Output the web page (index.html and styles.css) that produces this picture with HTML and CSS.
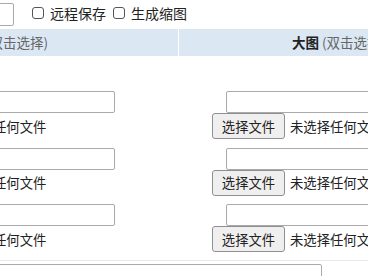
FILE: index.html
```html
<!DOCTYPE html>
<html lang="zh-CN">
<head>
<meta charset="utf-8">
<link rel="stylesheet" href="styles.css">
</head>
<body>
<div class="canvas">
  <div class="topbar">
    <input class="top-input" type="text">
    <label class="check"><input type="checkbox"><span>远程保存</span></label>
    <label class="check"><input type="checkbox"><span>生成缩图</span></label>
  </div>
  <div class="grid">
    <div class="head head-left"><b>小图</b>&nbsp;<span class="hint">(双击选择)</span></div>
    <div class="head head-right"><b>大图</b>&nbsp;<span class="hint">(双击选择)</span></div>
    <div class="cell cell-left">
      <div class="item"><input class="path" type="text"><div class="file"><button>选择文件</button><span>未选择任何文件</span></div></div>
      <div class="item"><input class="path" type="text"><div class="file"><button>选择文件</button><span>未选择任何文件</span></div></div>
      <div class="item"><input class="path" type="text"><div class="file"><button>选择文件</button><span>未选择任何文件</span></div></div>
    </div>
    <div class="cell cell-right">
      <div class="item"><input class="path" type="text"><div class="file"><button>选择文件</button><span>未选择任何文件</span></div></div>
      <div class="item"><input class="path" type="text"><div class="file"><button>选择文件</button><span>未选择任何文件</span></div></div>
      <div class="item"><input class="path" type="text"><div class="file"><button>选择文件</button><span>未选择任何文件</span></div></div>
    </div>
  </div>
  <div class="note"></div>
</div>
</body>
</html>
```
FILE: styles.css
```css
html, body {
  margin: 0;
  padding: 0;
  background: #fff;
  overflow: hidden;
}
body {
  font-family: "Noto Sans CJK SC", "Noto Sans", sans-serif;
  color: #222;
}
.canvas {
  width: 640px;
  margin-left: -140px;
}
.topbar {
  height: 29px;
  display: flex;
  align-items: flex-start;
}
.top-input {
  box-sizing: border-box;
  width: 100px;
  height: 23px;
  margin: 3px 0 0 54px;
  border: 1px solid #aaa;
  border-radius: 2px;
  padding: 0;
}
.check {
  display: flex;
  align-items: center;
  height: 26px;
  font-size: 14px;
  line-height: 26px;
}
.check:first-of-type { margin-left: 18px; }
.check + .check { margin-left: 7px; }
.check input {
  appearance: none;
  -webkit-appearance: none;
  box-sizing: border-box;
  width: 12px;
  height: 12px;
  margin: 0 6px 0 0;
  border: 1px solid #555;
  border-radius: 3px;
  background: #fff;
}
.grid {
  display: grid;
  grid-template-columns: 318px 321px;
  column-gap: 1px;
  border-bottom: 1px solid #e6e9ec;
}
.head {
  height: 27px;
  background: #dbe8f4;
  display: flex;
  align-items: center;
  font-size: 13.5px;
  line-height: 27px;
  white-space: nowrap;
}
.head b { color: #222; }
.hint { color: #666; }
.head-left {
  justify-content: flex-end;
  padding-right: 130px;
}
.head-right {
  padding-left: 113px;
}
.cell {
  padding: 35px 0 8px;
}
.cell-left { padding-left: 15px; }
.cell-right { padding-left: 33px; }
.item + .item { margin-top: 8.5px; }
.path {
  display: block;
  box-sizing: border-box;
  width: 226px;
  height: 22px;
  margin: 0 0 0 14px;
  padding: 0;
  border: 1px solid #aaa;
  border-radius: 2px;
}
.file {
  display: flex;
  align-items: center;
  height: 26px;
  font-size: 13.33px;
  white-space: nowrap;
}
.file button {
  box-sizing: border-box;
  width: 73px;
  height: 26px;
  padding: 0;
  margin: 0 5px 0 0;
  font-family: inherit;
  font-size: 13.33px;
  color: #222;
  background: #efefef;
  border: 1px solid #8f8f8f;
  border-radius: 3px;
}
.note {
  box-sizing: border-box;
  width: 452px;
  height: 40px;
  margin: 3px 0 0 10px;
  border: 1px solid #aaa;
  border-radius: 2px;
}
```
